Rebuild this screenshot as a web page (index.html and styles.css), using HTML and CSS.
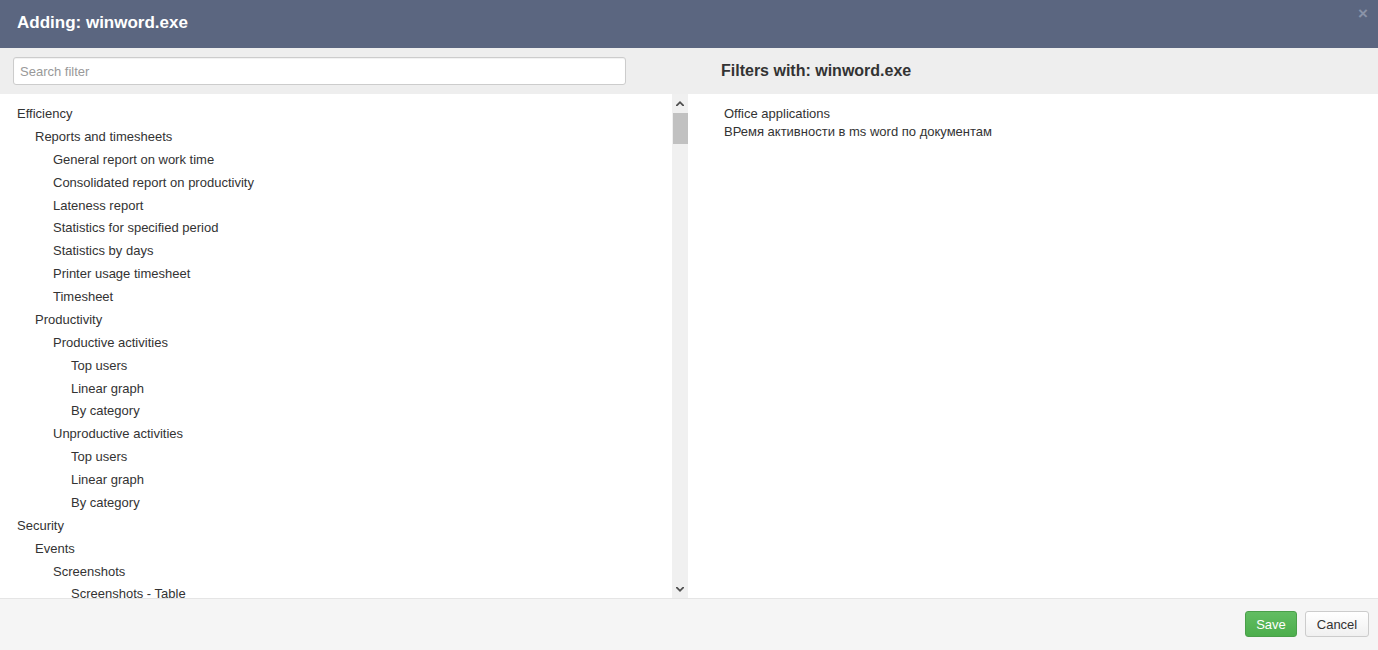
FILE: index.html
```html
<!DOCTYPE html>
<html>
<head>
<meta charset="utf-8">
<link rel="stylesheet" href="styles.css">
</head>
<body>
<div class="modal">
  <div class="header">
    <h1 class="title">Adding: winword.exe</h1>
    <span class="close">×</span>
  </div>
  <div class="toolbar">
    <div class="search-wrap"><input class="search" type="text" placeholder="Search filter"></div>
    <div class="right-title">Filters with: winword.exe</div>
  </div>
  <div class="body">
    <div class="left">
      <div class="tree">
        <div class="item l0">Efficiency</div>
        <div class="item l1">Reports and timesheets</div>
        <div class="item l2">General report on work time</div>
        <div class="item l2">Consolidated report on productivity</div>
        <div class="item l2">Lateness report</div>
        <div class="item l2">Statistics for specified period</div>
        <div class="item l2">Statistics by days</div>
        <div class="item l2">Printer usage timesheet</div>
        <div class="item l2">Timesheet</div>
        <div class="item l1">Productivity</div>
        <div class="item l2">Productive activities</div>
        <div class="item l3">Top users</div>
        <div class="item l3">Linear graph</div>
        <div class="item l3">By category</div>
        <div class="item l2">Unproductive activities</div>
        <div class="item l3">Top users</div>
        <div class="item l3">Linear graph</div>
        <div class="item l3">By category</div>
        <div class="item l0">Security</div>
        <div class="item l1">Events</div>
        <div class="item l2">Screenshots</div>
        <div class="item l3">Screenshots - Table</div>
      </div>
      <div class="scrollbar">
        <div class="arrow up"><svg width="8" height="6" viewBox="0 0 8 6"><path d="M0 5 L4 1 L8 5 L8 6 L6.5 6 L4 3.5 L1.5 6 L0 6 Z" fill="#505050"/></svg></div>
        <div class="thumb"></div>
        <div class="track"></div>
        <div class="arrow down"><svg width="8" height="6" viewBox="0 0 8 6"><path d="M0 1 L4 5 L8 1 L8 0 L6.5 0 L4 2.5 L1.5 0 L0 0 Z" fill="#505050"/></svg></div>
      </div>
    </div>
    <div class="right">
      <div class="filter">Office applications</div>
      <div class="filter">ВРемя активности в ms word по документам</div>
    </div>
  </div>
  <div class="footer">
    <button class="btn save">Save</button>
    <button class="btn cancel">Cancel</button>
  </div>
</div>
</body>
</html>
```
FILE: styles.css
```css
html, body {
  margin: 0;
  padding: 0;
  height: 100%;
  overflow: hidden;
}
body {
  font-family: "Liberation Sans", Arial, sans-serif;
  font-size: 13px;
  color: #333;
  background: #fff;
}
.modal {
  display: flex;
  flex-direction: column;
  height: 650px;
}
.header {
  height: 48px;
  background: #5b6680;
  display: flex;
  align-items: center;
  justify-content: space-between;
  padding: 0 10px 0 17px;
  box-sizing: border-box;
  flex: none;
}
.title {
  margin: 0;
  color: #fff;
  font-size: 17px;
  font-weight: bold;
  padding-bottom: 2px;
}
.close {
  color: #8a93a8;
  font-size: 17px;
  font-weight: bold;
  align-self: flex-start;
  margin-top: 4px;
}
.toolbar {
  height: 46px;
  background: #eeeeee;
  display: flex;
  align-items: center;
  flex: none;
}
.search-wrap {
  width: 688px;
  padding: 0 62px 0 13px;
  box-sizing: border-box;
}
.search {
  width: 100%;
  height: 28px;
  box-sizing: border-box;
  border: 1px solid #cccccc;
  border-radius: 3px;
  padding: 0 6px;
  font-family: "Liberation Sans", Arial, sans-serif;
  font-size: 13px;
  color: #333;
  background: #fff;
  outline: none;
  box-shadow: inset 0 1px 1px rgba(0,0,0,0.06);
}
.search::placeholder {
  color: #999;
}
.right-title {
  padding-left: 33px;
  font-size: 16px;
  font-weight: bold;
  color: #333;
}
.body {
  display: flex;
  height: 504px;
  flex: none;
}
.left {
  width: 688px;
  display: flex;
  overflow: hidden;
}
.tree {
  flex: 1;
  padding-top: 9px;
  overflow: hidden;
}
.item {
  height: 22.88px;
  line-height: 22.88px;
  white-space: nowrap;
}
.l0 { padding-left: 17px; }
.l1 { padding-left: 35px; }
.l2 { padding-left: 53px; }
.l3 { padding-left: 71px; }
.scrollbar {
  width: 16px;
  background: #f0f0f0;
  display: flex;
  flex-direction: column;
  align-items: center;
}
.arrow {
  height: 17px;
  width: 16px;
  display: flex;
  align-items: center;
  justify-content: center;
}
.thumb {
  width: 15px;
  height: 31px;
  background: #c1c1c1;
  margin-top: 2px;
}
.track {
  flex: 1;
}
.right {
  flex: 1;
  padding: 11px 0 0 36px;
}
.filter {
  line-height: 18px;
}
.footer {
  flex: 1;
  background: #f5f5f5;
  border-top: 1px solid #e5e5e5;
  display: flex;
  justify-content: flex-end;
  align-items: flex-start;
  padding: 12px 9px 0 0;
  gap: 8px;
}
.btn {
  height: 26px;
  font-family: "Liberation Sans", Arial, sans-serif;
  font-size: 13px;
  border-radius: 3px;
  padding: 0 12px;
  cursor: pointer;
}
.save {
  background: #5cb85c;
  background: linear-gradient(#62bd62, #4cae4c);
  border: 1px solid #4a9f4a;
  color: #fff;
  width: 52px;
  padding: 0;
}
.cancel {
  background: linear-gradient(#ffffff, #f0f0f0);
  border: 1px solid #cccccc;
  color: #333;
  width: 64px;
  padding: 0;
}
```
